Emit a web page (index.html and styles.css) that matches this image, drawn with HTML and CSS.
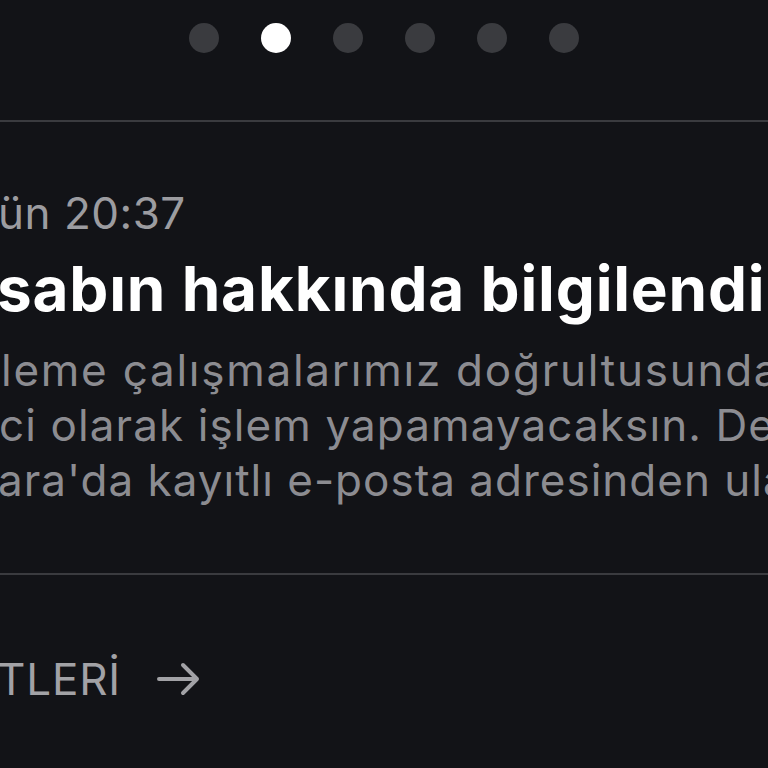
FILE: index.html
```html
<!DOCTYPE html>
<html lang="tr">
<head>
<meta charset="utf-8">
<title>Bildirim</title>
<link rel="stylesheet" href="styles.css">
</head>
<body>
<div class="screen">
  <div class="dots">
    <span class="dot"></span>
    <span class="dot active"></span>
    <span class="dot"></span>
    <span class="dot"></span>
    <span class="dot"></span>
    <span class="dot"></span>
  </div>
  <div class="divider top"></div>
  <div class="notice">
    <div class="time">ün 20:37</div>
    <div class="title">sabın hakkında bilgilendirme</div>
    <div class="body">
      <div class="line l1">leme çalışmalarımız doğrultusunda hesabın</div>
      <div class="line l2">ci olarak işlem yapamayacaksın. Detaylar</div>
      <div class="line l3">ara'da kayıtlı e-posta adresinden ulaşabilirsin.</div>
    </div>
  </div>
  <div class="divider bottom"></div>
  <a class="more" href="#">
    <span class="more-text">TLERİ</span>
    <svg class="arrow" width="46" height="36" viewBox="0 0 46 36" aria-hidden="true">
      <path d="M3 18 H41 M27 4 L41 18 L27 32" fill="none" stroke="#a2a2a6" stroke-width="4" stroke-linecap="round" stroke-linejoin="round"/>
    </svg>
  </a>
</div>
</body>
</html>
```
FILE: styles.css
```css
html, body {
  margin: 0;
  padding: 0;
  background: #121317;
}
body {
  width: 768px;
  height: 768px;
  overflow: hidden;
  font-family: Inter, "Noto Sans", sans-serif;
}
.screen {
  display: flex;
  flex-direction: column;
  width: 768px;
}
.dots {
  display: flex;
  gap: 42px;
  margin: 23px 0 0 189px;
}
.dot {
  width: 30px;
  height: 30px;
  border-radius: 50%;
  background: #3a3b3f;
}
.dot.active {
  background: #ffffff;
}
.divider {
  height: 2px;
  background: #3a3b3f;
}
.divider.top {
  margin-top: 67px;
}
.notice {
  display: flex;
  flex-direction: column;
  white-space: nowrap;
}
.time {
  margin-top: 65px;
  font-size: 44px;
  line-height: 52px;
  color: #9c9ca0;
  letter-spacing: 0.5px;
  margin-left: -2px;
}
.title {
  margin-top: 15px;
  font-size: 62px;
  line-height: 70px;
  font-weight: 700;
  color: #ffffff;
  letter-spacing: 0.8px;
  margin-left: -3px;
}
.body {
  margin-top: 19px;
  font-size: 44px;
  line-height: 55px;
  color: #8c8c91;
  letter-spacing: 1.1px;
}
.l1 { margin-left: 1px; letter-spacing: 1.75px; }
.l2 { margin-left: -1px; }
.l3 { margin-left: -2px; letter-spacing: 1px; }
.divider.bottom {
  margin-top: 65px;
}
.more {
  display: flex;
  align-items: center;
  gap: 35px;
  margin-top: 78px;
  margin-left: -3px;
  text-decoration: none;
  font-size: 44px;
  line-height: 52px;
  color: #a2a2a6;
  letter-spacing: 0.8px;
}
.arrow {
  display: block;
}
```
